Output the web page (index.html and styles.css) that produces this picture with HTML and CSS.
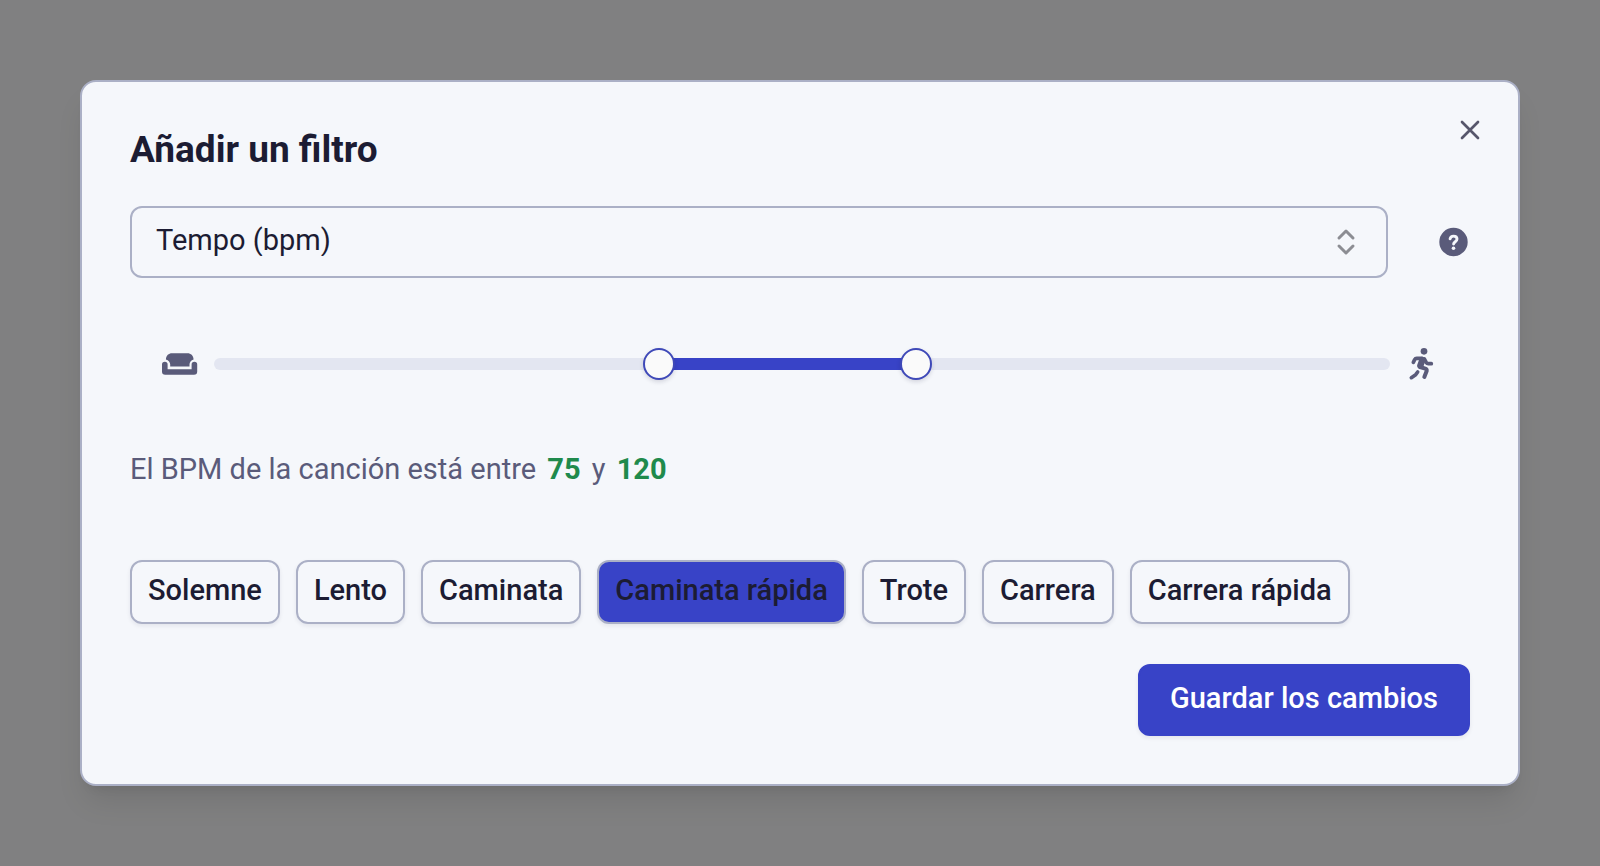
FILE: index.html
```html
<!DOCTYPE html>
<html lang="es">
<head>
    <meta charset="UTF-8">
    <meta name="viewport" content="width=device-width, initial-scale=1.0">
    <title>Añadir un filtro</title>
    <link rel="stylesheet" href="styles.css">
</head>
<body>
    <div class="overlay">
        <form class="dialog" role="dialog" aria-labelledby="dialog-title">
            <h1 id="dialog-title">Añadir un filtro</h1>
            <button type="button" class="icon-button close" aria-label="Cerrar">
                <svg width="32" height="32" viewBox="0 0 24 24" fill="none" stroke="currentColor" stroke-width="2" stroke-linecap="round"><path d="M18 6 6 18M6 6l12 12"/></svg>
            </button>

            <div class="filter-row">
                <div class="select-wrap">
                    <select id="filter-type" aria-label="Filtro">
                        <option>Tempo (bpm)</option>
                    </select>
                    <svg class="select-icon" width="20" height="28" viewBox="0 0 20 28" fill="none" stroke="currentColor" stroke-width="3" stroke-linecap="round" stroke-linejoin="round"><path d="M3 10l7-7 7 7M3 18l7 7 7-7"/></svg>
                </div>
                <button type="button" class="icon-button" aria-label="Ayuda">
                    <svg width="34" height="34" viewBox="0 0 34 34"><circle cx="17.5" cy="17" r="14.2" fill="currentColor"/><path d="M14.1 13.8c.3-1.7 1.6-2.7 3.4-2.7 2 0 3.5 1.2 3.5 3 0 2.6-3.4 2.6-3.4 5" fill="none" stroke="#f5f7fb" stroke-width="2.9" stroke-linecap="round"/><circle cx="17.5" cy="23.3" r="1.8" fill="#f5f7fb"/></svg>
                </button>
            </div>

            <div class="slider-row">
                <svg width="36" height="22" viewBox="0 0 36 22" fill="currentColor">
                    <path d="M3.9 6.4C4.2 2.5 6.6.3 10 .3h15.500c3.400 0 5.800 2.200 6.100 6.100-2.700.7-4.100 2.600-4.100 5.200v2H8.200v-2c0-2.600-1.600-4.500-4.300-5.200z"/>
                    <path d="M0 11.500a2.800 2.800 0 0 1 5.600 0v4.700h24v-4.700a2.800 2.800 0 0 1 5.600 0v7a3.200 3.200 0 0 1-3.200 3.200H3.200A3.200 3.200 0 0 1 0 18.500z"/>
                </svg>
                <div class="slider" id="slider" style="--from: 37.5%; --to: 60%">
                    <input type="range" id="bpm-min" min="0" max="200" value="75" aria-label="BPM mínimo">
                    <input type="range" id="bpm-max" min="0" max="200" value="120" aria-label="BPM máximo">
                </div>
                <svg width="32" height="34" viewBox="-7 0 96 102" fill="none" stroke="currentColor" stroke-linecap="round" stroke-linejoin="round">
                    <circle cx="47" cy="13" r="10" fill="currentColor" stroke="none"/>
                    <path stroke-width="11" d="M15 46l4-8q2-4 6-4h16M48 36l6 11q2 3 6 3h9"/>
                    <path stroke-width="19" d="M42 39l-6 17"/>
                    <path stroke-width="12" d="M35 60l16 5q5 2 4 7l-7 18"/>
                    <path stroke-width="11" d="M28 75l-6 8-13 9"/>
                </svg>
            </div>

            <p class="summary">El BPM de la canción está entre <output id="min-value" for="bpm-min">75</output> y <output id="max-value" for="bpm-max">120</output></p>

            <div class="presets">
                <button type="button">Solemne</button>
                <button type="button">Lento</button>
                <button type="button">Caminata</button>
                <button type="button" class="active">Caminata rápida</button>
                <button type="button">Trote</button>
                <button type="button">Carrera</button>
                <button type="button">Carrera rápida</button>
            </div>

            <div class="actions">
                <button type="button" class="save">Guardar los cambios</button>
            </div>
        </form>
    </div>

    <script>
        const slider = document.getElementById('slider');
        const minInput = document.getElementById('bpm-min');
        const maxInput = document.getElementById('bpm-max');

        function updateRange() {
            slider.style.setProperty('--from', minInput.value / 2 + '%');
            slider.style.setProperty('--to', maxInput.value / 2 + '%');
            document.getElementById('min-value').textContent = minInput.value;
            document.getElementById('max-value').textContent = maxInput.value;
        }

        minInput.addEventListener('input', function() {
            this.value = Math.min(this.value, maxInput.value);
            updateRange();
        });
        maxInput.addEventListener('input', function() {
            this.value = Math.max(this.value, minInput.value);
            updateRange();
        });
    </script>
</body>
</html>
```
FILE: styles.css
```css
* {
    box-sizing: border-box;
}
body {
    margin: 0;
    font-family: Roboto, "Liberation Sans", sans-serif;
    font-size: 29px;
    line-height: 32px;
    color: #1c1c33;
    background-color: #808081;
}
button, select {
    font: inherit;
    color: inherit;
}
button {
    cursor: pointer;
}
svg {
    display: block;
    flex-shrink: 0;
}
.overlay {
    display: flex;
    align-items: center;
    min-height: 100vh;
    padding: 40px 80px;
}
.dialog {
    position: relative;
    flex: 1;
    min-width: 0;
    padding: 48px;
    background-color: #f5f7fb;
    border: 2px solid #abb0c6;
    border-radius: 16px;
    box-shadow: 0 20px 30px -6px rgba(0,0,0,0.1), 0 8px 12px -8px rgba(0,0,0,0.1);
}
h1 {
    margin: 0 0 36px;
    font-size: 37px;
    line-height: 40px;
    font-weight: 700;
}
.icon-button {
    padding: 0;
    border: none;
    background: none;
    color: #5a5b7a;
}
.close {
    position: absolute;
    top: 32px;
    right: 32px;
    color: #56566b;
}
.filter-row {
    display: flex;
    align-items: center;
    gap: 48px;
}
.select-wrap {
    position: relative;
    flex: 1;
}
select {
    display: block;
    width: 100%;
    height: 72px;
    padding: 16px 24px 20px;
    appearance: none;
    background: none;
    border: 2px solid #abb0c6;
    border-radius: 12px;
}
.select-icon {
    position: absolute;
    top: 22px;
    right: 32px;
    color: #8c8d93;
    pointer-events: none;
}
.slider-row {
    display: flex;
    align-items: center;
    gap: 16px;
    height: 36px;
    margin: 68px 0;
    padding: 0 32px;
    color: #5a5b7a;
}
.slider {
    display: grid;
    grid-template-rows: 12px;
    align-items: center;
    flex: 1;
    border-radius: 6px;
    background: linear-gradient(to right, #e3e6f1 var(--from), #3843c7 var(--from), #3843c7 var(--to), #e3e6f1 var(--to));
}
/* both ranges share one cell, only the thumbs take the mouse */
.slider input {
    grid-area: 1 / 1;
    width: 100%;
    height: 32px;
    margin: 0;
    appearance: none;
    background: none;
    pointer-events: none;
}
.slider input::-webkit-slider-thumb {
    width: 32px;
    height: 32px;
    appearance: none;
    background-color: #fafafa;
    border: 2px solid #3f49b8;
    border-radius: 50%;
    box-shadow: 0 2px 4px rgba(30,30,60,0.15);
    pointer-events: auto;
}
.summary {
    margin: 0 0 72px;
    line-height: 38px;
    color: #5a5b7a;
}
.summary output {
    margin: 0 4px;
    font-weight: 700;
    color: #1f8a4c;
}
.presets {
    display: flex;
    flex-wrap: wrap;
    gap: 16px;
}
.presets button, .save {
    padding: 12px 16px 16px;
    font-weight: 500;
    background: none;
    border: 2px solid #abb0c6;
    border-radius: 12px;
    box-shadow: 0 2px 4px rgba(30,30,60,0.08);
}
.presets .active {
    background-color: #3843c7;
}
.actions {
    display: flex;
    justify-content: flex-end;
    margin-top: 40px;
}
.save {
    padding: 16px 30px 20px;
    color: #fff;
    background-color: #3843c7;
    border-color: #3843c7;
}
```
